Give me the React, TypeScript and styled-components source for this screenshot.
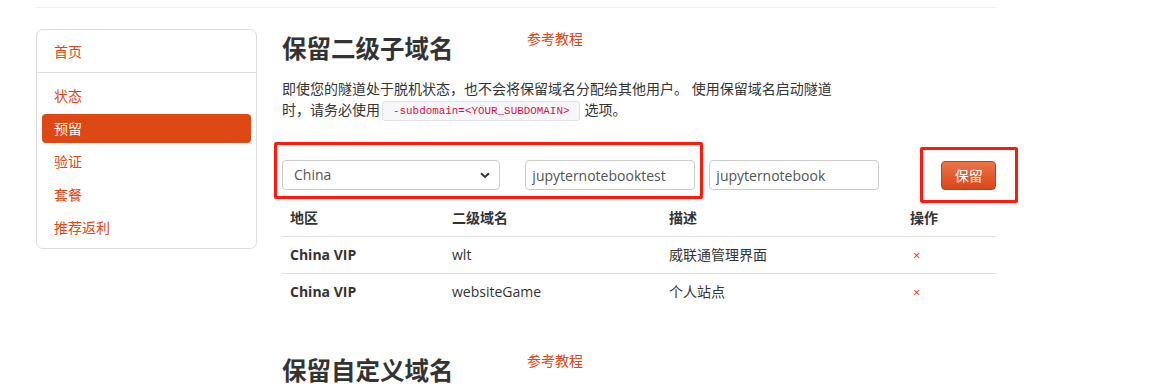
import React, { FC } from "react";
import styled, { createGlobalStyle } from "styled-components";

const GlobalStyle = createGlobalStyle`
  body {
    margin: 0;
    background: #fff;
    color: #333;
    font-family: "Open Sans", "Noto Sans CJK SC", sans-serif;
    font-size: 14px;
    line-height: 20px;
    overflow: hidden;
  }
`;

const navItems = ["状态", "预留", "验证", "套餐", "推荐返利"];

const rows = [
  { region: "China VIP", sub: "wlt", desc: "威联通管理界面" },
  { region: "China VIP", sub: "websiteGame", desc: "个人站点" },
];

const App: FC = () => {
  return (
    <Page>
      <GlobalStyle />
      <TopRule />
      <Layout>
        <Sidebar>
          <NavItem>首页</NavItem>
          <Divider />
          {navItems.map((item) => (
            <NavItem key={item} active={item === "预留"}>
              {item}
            </NavItem>
          ))}
        </Sidebar>
        <Main>
          <HeadingRow>
            <Title>保留二级子域名</Title>
            <HelpLink>参考教程</HelpLink>
          </HeadingRow>
          <Intro>
            即使您的隧道处于脱机状态，也不会将保留域名分配给其他用户。 使用保留域名启动隧道时，请务必使用
            <Code>-subdomain=&lt;YOUR_SUBDOMAIN&gt;</Code>
            选项。
          </Intro>
          <FormRow>
            <SelectBox>
              <span>China</span>
              <svg width="10" height="7" viewBox="0 0 10 7">
                <path d="M1 1.2 L5 5 L9 1.2" fill="none" stroke="#333" strokeWidth="1.9" />
              </svg>
            </SelectBox>
            <Input wide={170} gap={25} defaultValue="jupyternotebooktest" />
            <Input wide={170} gap={14} defaultValue="jupyternotebook" />
            <SaveButton>保留</SaveButton>
            <Mark left={-8} top={-18} w={429} h={57} />
            <Mark left={638} top={-13} w={98} h={56} />
          </FormRow>
          <Table>
            <HeadCell>地区</HeadCell>
            <HeadCell>二级域名</HeadCell>
            <HeadCell>描述</HeadCell>
            <HeadCell>操作</HeadCell>
            {rows.map((r) => (
              <React.Fragment key={r.sub}>
                <Cell bold>{r.region}</Cell>
                <Cell>{r.sub}</Cell>
                <Cell>{r.desc}</Cell>
                <Cell>
                  <Remove>×</Remove>
                </Cell>
              </React.Fragment>
            ))}
          </Table>
          <HeadingRow second>
            <Title>保留自定义域名</Title>
            <HelpLink>参考教程</HelpLink>
          </HeadingRow>
        </Main>
      </Layout>
    </Page>
  );
};

const Page = styled.div`
  width: 960px;
  margin-left: 36px;
`;

const TopRule = styled.div`
  height: 7px;
  border-bottom: 1px solid #eee;
`;

const Layout = styled.div`
  display: flex;
  gap: 25px;
  margin-top: 21px;
  align-items: flex-start;
`;

const Sidebar = styled.nav`
  width: 221px;
  box-sizing: border-box;
  border: 1px solid #ddd;
  border-radius: 7px;
  padding: 7px 0 6px;
  display: flex;
  flex-direction: column;
  gap: 4px;
`;

const NavItem = styled.a<{ active?: boolean }>`
  display: block;
  margin: 0 5px;
  height: 29px;
  line-height: 29px;
  padding: 0 12px;
  border-radius: 4px;
  font-size: 14px;
  color: ${(p) => (p.active ? "#fff" : "#dd4814")};
  background: ${(p) => (p.active ? "#dd4814" : "transparent")};
  cursor: pointer;
`;

const Divider = styled.div`
  height: 1px;
  background: #ddd;
  margin: 2px 0 4px;
`;

const Main = styled.main`
  flex: 1;
  min-width: 0;
`;

const HeadingRow = styled.div<{ second?: boolean }>`
  display: flex;
  align-items: flex-start;
  margin-top: ${(p) => (p.second ? "41px" : "0")};
`;

const Title = styled.h3`
  width: 245px;
  margin: 0;
  font-size: 24.5px;
  line-height: 40px;
  font-weight: bold;
  color: #333;
`;

const HelpLink = styled.a`
  font-size: 14px;
  line-height: 20px;
  color: #dd4814;
  cursor: pointer;
`;

const Intro = styled.p`
  max-width: 556px;
  margin: 9px 0 0;
  font-size: 14px;
  line-height: 21px;
`;

const Code = styled.code`
  display: inline-block;
  height: 20px;
  box-sizing: border-box;
  line-height: 18px;
  padding: 0 10px;
  margin: 0 4px 0 2px;
  font-family: "Liberation Mono", monospace;
  font-size: 10.9px;
  color: #dd1144;
  background: #f7f7f9;
  border: 1px solid #e1e1e8;
  border-radius: 3px;
  vertical-align: middle;
`;

const FormRow = styled.div`
  position: relative;
  display: flex;
  align-items: center;
  margin-top: 39px;
  height: 30px;
`;

const SelectBox = styled.div`
  width: 220px;
  height: 30px;
  box-sizing: border-box;
  display: flex;
  align-items: center;
  justify-content: space-between;
  padding: 0 9px 0 11px;
  border: 1px solid #ccc;
  border-radius: 4px;
  color: #555;
  font-size: 14px;
`;

const Input = styled.input<{ wide: number; gap: number }>`
  width: ${(p) => p.wide}px;
  height: 30px;
  box-sizing: border-box;
  margin-left: ${(p) => p.gap}px;
  padding: 0 6px;
  border: 1px solid #ccc;
  border-radius: 4px;
  font-family: "Open Sans", sans-serif;
  font-size: 14px;
  color: #555;
  outline: none;
`;

const SaveButton = styled.button`
  margin-left: 62px;
  width: 55px;
  height: 29px;
  border: 1px solid #c54012;
  border-radius: 4px;
  background: linear-gradient(#ec7447, #d9461a);
  color: #fff;
  font-family: "Noto Sans CJK SC", sans-serif;
  font-size: 14px;
  cursor: pointer;
`;

const Mark = styled.div<{ left: number; top: number; w: number; h: number }>`
  position: absolute;
  left: ${(p) => p.left}px;
  top: ${(p) => p.top}px;
  width: ${(p) => p.w}px;
  height: ${(p) => p.h}px;
  box-sizing: border-box;
  border: 3px solid #ff1a0d;
  border-radius: 2px;
  pointer-events: none;
`;

const Table = styled.div`
  display: grid;
  grid-template-columns: 162px 217px 241px 1fr;
  width: 714px;
  margin-top: 10px;
`;

const HeadCell = styled.div`
  padding: 8px;
  font-weight: bold;
  line-height: 20px;
`;

const Cell = styled.div<{ bold?: boolean }>`
  padding: 8px;
  line-height: 20px;
  border-top: 1px solid #ddd;
  font-weight: ${(p) => (p.bold ? "bold" : "normal")};
`;

const Remove = styled.span`
  margin-left: 3px;
  color: #e2312a;
  font-size: 13px;
  cursor: pointer;
`;

export default App;
